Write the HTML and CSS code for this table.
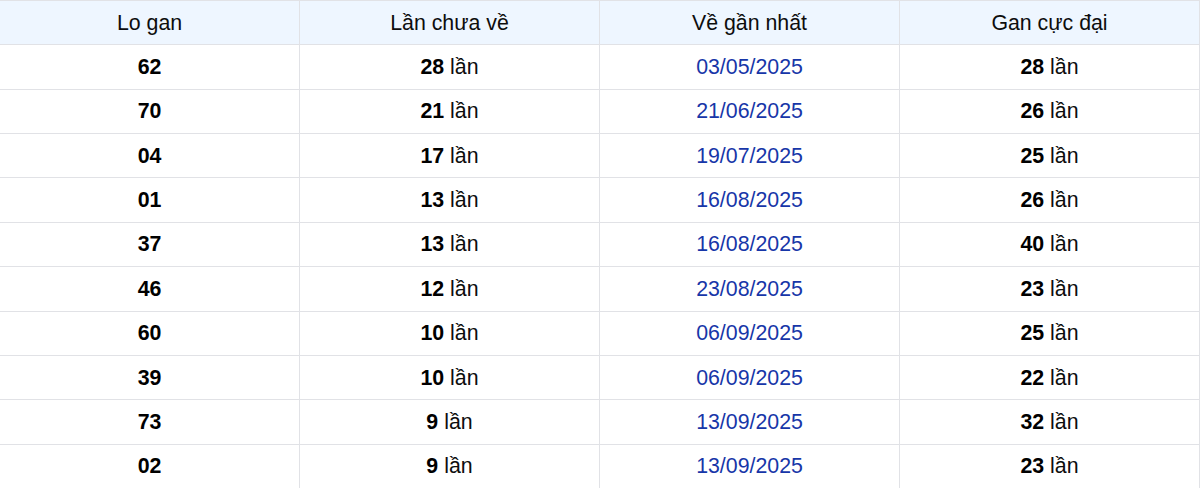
FILE: index.html
```html
<!DOCTYPE html>
<html lang="vi">
<head>
<meta charset="utf-8">
<link rel="stylesheet" href="styles.css">
</head>
<body>
<table class="gan-table">
  <thead>
    <tr><th>Lo gan</th><th>Lần chưa về</th><th>Về gần nhất</th><th>Gan cực đại</th></tr>
  </thead>
  <tbody>
    <tr><td><b>62</b></td><td><b>28</b> lần</td><td class="date">03/05/2025</td><td><b>28</b> lần</td></tr>
    <tr><td><b>70</b></td><td><b>21</b> lần</td><td class="date">21/06/2025</td><td><b>26</b> lần</td></tr>
    <tr><td><b>04</b></td><td><b>17</b> lần</td><td class="date">19/07/2025</td><td><b>25</b> lần</td></tr>
    <tr><td><b>01</b></td><td><b>13</b> lần</td><td class="date">16/08/2025</td><td><b>26</b> lần</td></tr>
    <tr><td><b>37</b></td><td><b>13</b> lần</td><td class="date">16/08/2025</td><td><b>40</b> lần</td></tr>
    <tr><td><b>46</b></td><td><b>12</b> lần</td><td class="date">23/08/2025</td><td><b>23</b> lần</td></tr>
    <tr><td><b>60</b></td><td><b>10</b> lần</td><td class="date">06/09/2025</td><td><b>25</b> lần</td></tr>
    <tr><td><b>39</b></td><td><b>10</b> lần</td><td class="date">06/09/2025</td><td><b>22</b> lần</td></tr>
    <tr><td><b>73</b></td><td><b>9</b> lần</td><td class="date">13/09/2025</td><td><b>32</b> lần</td></tr>
    <tr><td><b>02</b></td><td><b>9</b> lần</td><td class="date">13/09/2025</td><td><b>23</b> lần</td></tr>
  </tbody>
</table>
</body>
</html>
```
FILE: styles.css
```css
html, body {
  margin: 0;
  padding: 0;
  background: #fff;
  overflow: hidden;
}
body {
  font-family: "Liberation Sans", Arial, sans-serif;
  color: #0d0d0d;
}
.gan-table {
  border-collapse: collapse;
  width: 1201px;
  margin-left: -1px;
  table-layout: fixed;
  font-size: 21.33px;
}
.gan-table th,
.gan-table td {
  border: 1.6px solid #e1e2e6;
  text-align: center;
  padding: 0;
  height: 43.4px;
  line-height: 26px;
}
.gan-table th {
  background: #eef6ff;
  font-weight: normal;
  height: 43.2px;
}
.gan-table b {
  font-weight: bold;
  color: #000;
}
.gan-table .date {
  color: #1736a8;
}
```
